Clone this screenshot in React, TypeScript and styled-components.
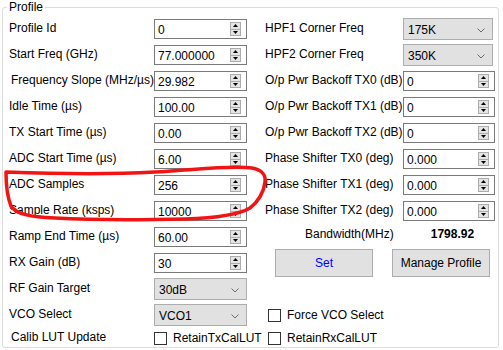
import React from "react"
import styled, { createGlobalStyle } from "styled-components"

const GlobalStyle = createGlobalStyle`
  html, body {
    margin: 0;
    padding: 0;
    background: #ffffff;
  }
  body {
    font-family: "Liberation Sans", Arial, sans-serif;
    font-size: 12px;
    color: #000000;
  }
`

const Page = styled.div`
  position: relative;
  width: 503px;
  height: 350px;
  overflow: hidden;
  background: #ffffff;
`

const Group = styled.fieldset`
  box-sizing: border-box;
  margin: 0 0 0 2px;
  width: 497px;
  height: 348px;
  padding: 2px 0 0 6px;
  border: 1px solid #dcdcdc;
  border-radius: 3px;
  min-width: 0;
`

const Legend = styled.legend`
  padding: 0 2px;
  margin-left: -2px;
  line-height: 14px;
  font-size: 12px;
`

const Columns = styled.div`
  display: flex;
  gap: 18px;
`

const Column = styled.div<{ $width: number }>`
  display: flex;
  flex-direction: column;
  width: ${(p) => p.$width}px;
`

const Row = styled.div<{ $height?: number }>`
  display: flex;
  align-items: center;
  height: ${(p) => p.$height ?? 26}px;
  white-space: nowrap;
`

const Label = styled.span<{ $width: number; $indent?: number }>`
  box-sizing: border-box;
  flex-shrink: 0;
  width: ${(p) => p.$width}px;
  padding-left: ${(p) => p.$indent ?? 0}px;
  margin-top: -2px;
`

const SpinBox = styled.div<{ $width: number }>`
  box-sizing: border-box;
  flex-shrink: 0;
  display: flex;
  align-items: center;
  width: ${(p) => p.$width}px;
  height: 20px;
  padding: 0 5px 0 3px;
  border: 1px solid #7a7a7a;
  background: #ffffff;
`

const SpinValue = styled.span`
  flex: 1;
  padding-top: 2px;
`

const Spinner = styled.div`
  box-sizing: border-box;
  display: flex;
  flex-direction: column;
  width: 11px;
  height: 14px;
  border: 1px solid #acacac;
  background: #e5e5e5;
`

const SpinHalf = styled.div`
  flex: 1;
  display: flex;
  align-items: center;
  justify-content: center;

  & + & {
    border-top: 1px solid #acacac;
  }
`

const Select = styled.div<{ $width: number }>`
  box-sizing: border-box;
  flex-shrink: 0;
  display: flex;
  align-items: center;
  justify-content: space-between;
  width: ${(p) => p.$width}px;
  height: 22px;
  padding: 2px 7px 0 4px;
  border: 1px solid #adadad;
  background: #e1e1e1;
`

const CheckRow = styled.label<{ $inset?: number }>`
  display: flex;
  align-items: center;
  gap: 6px;
  padding-left: ${(p) => p.$inset ?? 0}px;
`

const Box = styled.span`
  box-sizing: border-box;
  flex-shrink: 0;
  width: 13px;
  height: 13px;
  border: 1px solid #333333;
  background: #ffffff;
`

const Bandwidth = styled.div`
  display: flex;
  align-items: flex-start;
  height: 26px;
  padding: 3px 0 0 40px;
  box-sizing: border-box;
  gap: 37px;
`

const Value = styled.span`
  font-weight: bold;
`

const Buttons = styled.div`
  display: flex;
  align-items: center;
  height: 26px;
  padding-left: 10px;
  gap: 19px;
`

const Button = styled.button<{ $blue?: boolean }>`
  box-sizing: border-box;
  width: 98px;
  height: 28px;
  padding: 0;
  border: 1px solid #adadad;
  background: #e1e1e1;
  font-family: "Liberation Sans", Arial, sans-serif;
  font-size: 12px;
  color: ${(p) => (p.$blue ? "#0000ff" : "#000000")};
`

const Spacer = styled.div`
  height: 26px;
`

const Scribble = styled.svg`
  position: absolute;
  left: 0;
  top: 0;
  pointer-events: none;
`

const Spin = ({ value, width }: { value: string; width: number }) => (
  <SpinBox $width={width}>
    <SpinValue>{value}</SpinValue>
    <Spinner>
      <SpinHalf>
        <svg width="5" height="3" viewBox="0 0 5 3">
          <path d="M2.5 0 L5 3 L0 3 Z" fill="#000" />
        </svg>
      </SpinHalf>
      <SpinHalf>
        <svg width="5" height="3" viewBox="0 0 5 3">
          <path d="M0 0 L5 0 L2.5 3 Z" fill="#000" />
        </svg>
      </SpinHalf>
    </Spinner>
  </SpinBox>
)

const Drop = ({ value, width }: { value: string; width: number }) => (
  <Select $width={width}>
    <span>{value}</span>
    <svg width="8" height="5" viewBox="0 0 8 5">
      <path d="M0.5 0.5 L4 4 L7.5 0.5" fill="none" stroke="#6d6d6d" strokeWidth="1" />
    </svg>
  </Select>
)

const leftSpins: [string, string, number?][] = [
  ["Profile Id", "0"],
  ["Start Freq (GHz)", "77.000000"],
  ["Frequency Slope (MHz/µs)", "29.982", 2],
  ["Idle Time (µs)", "100.00"],
  ["TX Start Time (µs)", "0.00"],
  ["ADC Start Time (µs)", "6.00"],
  ["ADC Samples", "256"],
  ["Sample Rate (ksps)", "10000"],
  ["Ramp End Time (µs)", "60.00"],
  ["RX Gain (dB)", "30"],
]

const rightSpins: [string, string][] = [
  ["O/p Pwr Backoff TX0 (dB)", "0"],
  ["O/p Pwr Backoff TX1 (dB)", "0"],
  ["O/p Pwr Backoff TX2 (dB)", "0"],
  ["Phase Shifter TX0 (deg)", "0.000"],
  ["Phase Shifter TX1 (deg)", "0.000"],
  ["Phase Shifter TX2 (deg)", "0.000"],
]

export default function App() {
  return (
    <Page>
      <GlobalStyle />
      <Group>
        <Legend>Profile</Legend>
        <Columns>
          <Column $width={238}>
            {leftSpins.map(([label, value, indent]) => (
              <Row key={label}>
                <Label $width={145} $indent={indent}>{label}</Label>
                <Spin value={value} width={93} />
              </Row>
            ))}
            <Row>
              <Label $width={145}>RF Gain Target</Label>
              <Drop value="30dB" width={93} />
            </Row>
            <Row>
              <Label $width={145}>VCO Select</Label>
              <Drop value="VCO1" width={93} />
            </Row>
            <Row $height={20}>
              <Label $width={145} $indent={2}>Calib LUT Update</Label>
              <CheckRow>
                <Box />
                RetainTxCalLUT
              </CheckRow>
            </Row>
          </Column>
          <Column $width={230}>
            <Row>
              <Label $width={138}>HPF1 Corner Freq</Label>
              <Drop value="175K" width={90} />
            </Row>
            <Row>
              <Label $width={138}>HPF2 Corner Freq</Label>
              <Drop value="350K" width={90} />
            </Row>
            {rightSpins.map(([label, value]) => (
              <Row key={label}>
                <Label $width={138}>{label}</Label>
                <Spin value={value} width={92} />
              </Row>
            ))}
            <Bandwidth>
              <span>Bandwidth(MHz)</span>
              <Value>1798.92</Value>
            </Bandwidth>
            <Buttons>
              <Button $blue>Set</Button>
              <Button>Manage Profile</Button>
            </Buttons>
            <Spacer />
            <Row>
              <CheckRow $inset={3}>
                <Box />
                Force VCO Select
              </CheckRow>
            </Row>
            <Row $height={20}>
              <CheckRow $inset={3}>
                <Box />
                RetainRxCalLUT
              </CheckRow>
            </Row>
          </Column>
        </Columns>
      </Group>
      <Scribble width="503" height="350" viewBox="0 0 503 350">
        <path
          d="M6 172 C60 174 120 174 155 172 C195 170 230 165 252 168 C263 170 266 176 265 182 C264 192 258 202 250 208 C240 214 215 218 185 219 C140 220 90 220 55 218 C30 217 16 214 11 206 C7 196 6 184 6 172 Z"
          fill="none"
          stroke="#f21414"
          strokeWidth="3.5"
          strokeLinejoin="round"
        />
      </Scribble>
    </Page>
  )
}
